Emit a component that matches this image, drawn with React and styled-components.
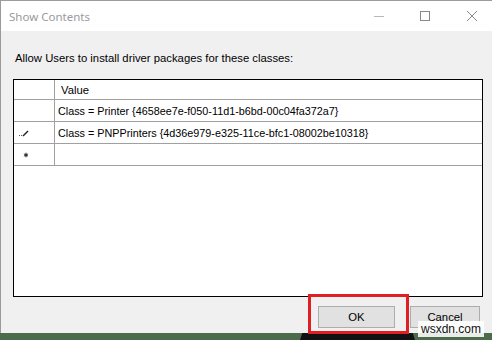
import React from "react";
import styled, { createGlobalStyle } from "styled-components";

const GlobalStyle = createGlobalStyle`
  html, body { margin: 0; padding: 0; background: #4b6b4c; }
  * { box-sizing: border-box; }
`;

const Screen = styled.div`
  position: relative;
  width: 492px;
  height: 340px;
  overflow: hidden;
  display: flex;
  flex-direction: column;
  font-family: "Liberation Sans", Arial, sans-serif;
`;

const Window = styled.div`
  height: 333px;
  display: flex;
  flex-direction: column;
  border-top: 1px solid #9c9c9c;
  border-left: 1px solid #9a9a9a;
  box-shadow: inset 1px 0 0 #cfcfcf;
  background: #f0f0f0;
`;

const TitleBar = styled.div`
  height: 30px;
  flex: none;
  display: flex;
  align-items: center;
  background: #ffffff;
  padding-left: 8px;
`;

const Title = styled.div`
  font-family: "Segoe UI", "Noto Sans", sans-serif;
  font-size: 11.5px;
  color: #9a9a9a;
  padding-top: 1px;
`;

const Controls = styled.div`
  margin-left: auto;
  display: flex;
  height: 100%;
`;

const CtrlButton = styled.div`
  width: ${(p) => p.$w || 46}px;
  height: 100%;
  display: flex;
  align-items: center;
  justify-content: center;
  padding-left: ${(p) => p.$pl || 0}px;
`;

const Body = styled.div`
  flex: 1;
  display: flex;
  flex-direction: column;
  padding: 21px 9px 0 12px;
  background: #f0f0f0;
`;

const Label = styled.div`
  font-size: 11.3px;
  line-height: 13px;
  height: 13px;
  color: #000;
  padding-left: 2px;
`;

const Grid = styled.div`
  margin-top: 14px;
  height: 218px;
  border: 1px solid #000;
  background: #fff;
  display: flex;
  flex-direction: column;
`;

const GridRow = styled.div`
  display: grid;
  grid-template-columns: 41px 1fr;
  height: ${(p) => (p.$header ? 20 : 22)}px;
  border-bottom: 1px solid #a0a0a0;
  flex: none;
`;

const RowHead = styled.div`
  border-right: 1px solid #a0a0a0;
  display: flex;
  align-items: center;
  padding-left: 3px;
`;

const Cell = styled.div`
  display: flex;
  align-items: center;
  padding-left: ${(p) => (p.$header ? 6 : 3)}px;
  font-size: ${(p) => (p.$header ? 11.3 : 10.8)}px;
  color: #000;
  white-space: nowrap;
`;

const ButtonRow = styled.div`
  margin-top: 9px;
  display: flex;
  justify-content: flex-end;
  gap: 15px;
  margin-right: 3px;
`;

const Button = styled.div`
  width: ${(p) => p.$w}px;
  height: 22px;
  background: #e1e1e1;
  border: 1px solid #adadad;
  display: flex;
  align-items: center;
  justify-content: center;
  font-size: 11.3px;
  color: #000;
`;

const Desktop = styled.div`
  flex: 1;
  display: flex;
  background: #4b6b4c;
`;

const DesktopShade = styled.div`
  margin-left: 300px;
  width: 115px;
  background: #111;
  clip-path: polygon(2% 0, 98% 0, 100% 100%, 0 100%);
`;

const Highlight = styled.div`
  position: absolute;
  left: 308px;
  top: 294px;
  width: 101px;
  height: 40px;
  border: 3px solid #e01f24;
`;

const Watermark = styled.div`
  position: absolute;
  left: 418px;
  top: 321px;
  padding: 0 3px;
  height: 16px;
  line-height: 16px;
  font-size: 12px;
  color: #111;
  background: rgba(255, 255, 255, 0.88);
  font-family: "Liberation Sans", Arial, sans-serif;
`;

const Pencil = () => (
  <svg width="12" height="10" viewBox="0 0 12 10">
    <rect x="2" y="7" width="1" height="1" fill="#555" />
    <rect x="4" y="7" width="1" height="1" fill="#555" />
    <path d="M6 8 L11 3" stroke="#222" strokeWidth="1.4" />
  </svg>
);

const Star = () => (
  <svg width="12" height="10" viewBox="0 0 12 10">
    <path d="M9 2.6 V7.4 M6.9 3.8 L11.1 6.2 M6.9 6.2 L11.1 3.8" stroke="#555" strokeWidth="0.9" />
    <circle cx="9" cy="5" r="1.6" fill="#333" />
  </svg>
);

const rows = [
  { head: null, value: "Class = Printer {4658ee7e-f050-11d1-b6bd-00c04fa372a7}" },
  { head: "pencil", value: "Class = PNPPrinters {4d36e979-e325-11ce-bfc1-08002be10318}" },
  { head: "star", value: "" },
];

export default function App() {
  return (
    <>
      <GlobalStyle />
      <Screen>
        <Window>
          <TitleBar>
            <Title>Show Contents</Title>
            <Controls>
              <CtrlButton>
                <svg width="12" height="10" viewBox="0 0 12 10">
                  <path d="M1 5.5 H11" stroke="#b8b8b8" strokeWidth="1" />
                </svg>
              </CtrlButton>
              <CtrlButton>
                <svg width="12" height="12" viewBox="0 0 12 12">
                  <rect x="1.5" y="1.5" width="9" height="9" fill="none" stroke="#888" strokeWidth="1" />
                </svg>
              </CtrlButton>
              <CtrlButton $w={44} $pl={4}>
                <svg width="12" height="12" viewBox="0 0 12 12">
                  <path d="M1 1 L11 11 M11 1 L1 11" stroke="#888" strokeWidth="1" />
                </svg>
              </CtrlButton>
            </Controls>
          </TitleBar>
          <Body>
            <Label>Allow Users to install driver packages for these classes:</Label>
            <Grid>
              <GridRow $header>
                <RowHead />
                <Cell $header>Value</Cell>
              </GridRow>
              {rows.map((r, i) => (
                <GridRow key={i}>
                  <RowHead>
                    {r.head === "pencil" && <Pencil />}
                    {r.head === "star" && <Star />}
                  </RowHead>
                  <Cell>{r.value}</Cell>
                </GridRow>
              ))}
            </Grid>
            <ButtonRow>
              <Button $w={77}>OK</Button>
              <Button $w={70}>Cancel</Button>
            </ButtonRow>
          </Body>
        </Window>
        <Desktop>
          <DesktopShade />
        </Desktop>
        <Highlight />
        <Watermark>wsxdn.com</Watermark>
      </Screen>
    </>
  );
}
